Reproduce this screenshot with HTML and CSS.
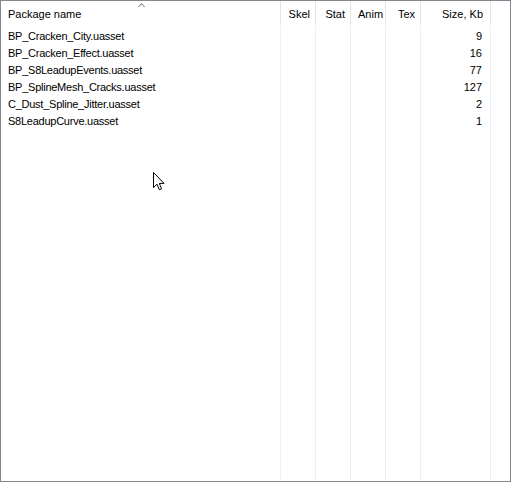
FILE: index.html
```html
<!DOCTYPE html>
<html lang="en">
<head>
  <meta charset="UTF-8">
  <title>Packages</title>
  <link rel="stylesheet" href="styles.css">
</head>
<body>
  <div class="listView">
    <div class="header">
      <div class="col name">Package name<span class="sortArrow"></span></div>
      <div class="col num">Skel</div>
      <div class="col num">Stat</div>
      <div class="col num">Anim</div>
      <div class="col num">Tex</div>
      <div class="col num size">Size, Kb</div>
      <div class="col filler"></div>
    </div>
    <div class="rows">
      <div class="column name">
        <div class="cell">BP_Cracken_City.uasset</div>
        <div class="cell">BP_Cracken_Effect.uasset</div>
        <div class="cell">BP_S8LeadupEvents.uasset</div>
        <div class="cell">BP_SplineMesh_Cracks.uasset</div>
        <div class="cell">C_Dust_Spline_Jitter.uasset</div>
        <div class="cell">S8LeadupCurve.uasset</div>
      </div>
      <div class="column num"></div>
      <div class="column num"></div>
      <div class="column num"></div>
      <div class="column num"></div>
      <div class="column num size">
        <div class="cell">9</div>
        <div class="cell">16</div>
        <div class="cell">77</div>
        <div class="cell">127</div>
        <div class="cell">2</div>
        <div class="cell">1</div>
      </div>
      <div class="column filler"></div>
    </div>
    <!-- mouse pointer sitting over the list -->
    <svg class="cursor" width="13" height="20" viewBox="0 0 13 20">
      <path d="M0.5 0.5 L0.5 15.5 L4 12.2 L6.4 17.8 L8.6 16.9 L6.3 11.4 L11 11.4 Z" fill="#fff" stroke="#000" stroke-width="1" stroke-linejoin="miter"/>
    </svg>
  </div>
</body>
</html>
```

FILE: styles.css
```css
* {
  box-sizing: border-box;
}
body {
  margin: 0;
  font-family: "Liberation Sans", Arial, sans-serif;
  font-size: 11px;
  color: #000;
  background: #fff;
}
.listView {
  position: relative;
  width: 511px;
  height: 482px;
  border: 1px solid #828790;
  display: flex;
  flex-direction: column;
}
.header {
  display: flex;
  height: 26px;
}
.header .col {
  height: 24px;
  line-height: 27px;
  border-right: 1px solid #e5e5e5;
  padding: 0 5px 0 7px;
  position: relative;
  white-space: nowrap;
}
.header .size {
  padding-right: 7px;
}
.header .filler {
  border-right: none;
}
.name {
  width: 280px;
  flex: none;
}
.num {
  width: 35px;
  flex: none;
  text-align: right;
}
.size {
  width: 70px;
}
.filler {
  flex: 1;
}
.sortArrow {
  position: absolute;
  left: 138px;
  top: 3px;
  width: 5px;
  height: 5px;
  border-left: 1px solid #8f8f8f;
  border-top: 1px solid #8f8f8f;
  transform: rotate(45deg);
}
.rows {
  flex: 1;
  display: flex;
}
.column {
  border-right: 1px solid #e9f0fb;
  padding: 0 7px;
}
.column.name .cell {
  letter-spacing: -0.25px;
}
.column.size {
  padding-right: 8px;
}
.column.filler {
  border-right: none;
}
.cell {
  height: 17px;
  line-height: 18px;
  white-space: nowrap;
}
.cursor {
  position: absolute;
  left: 152px;
  top: 171px;
}
```
